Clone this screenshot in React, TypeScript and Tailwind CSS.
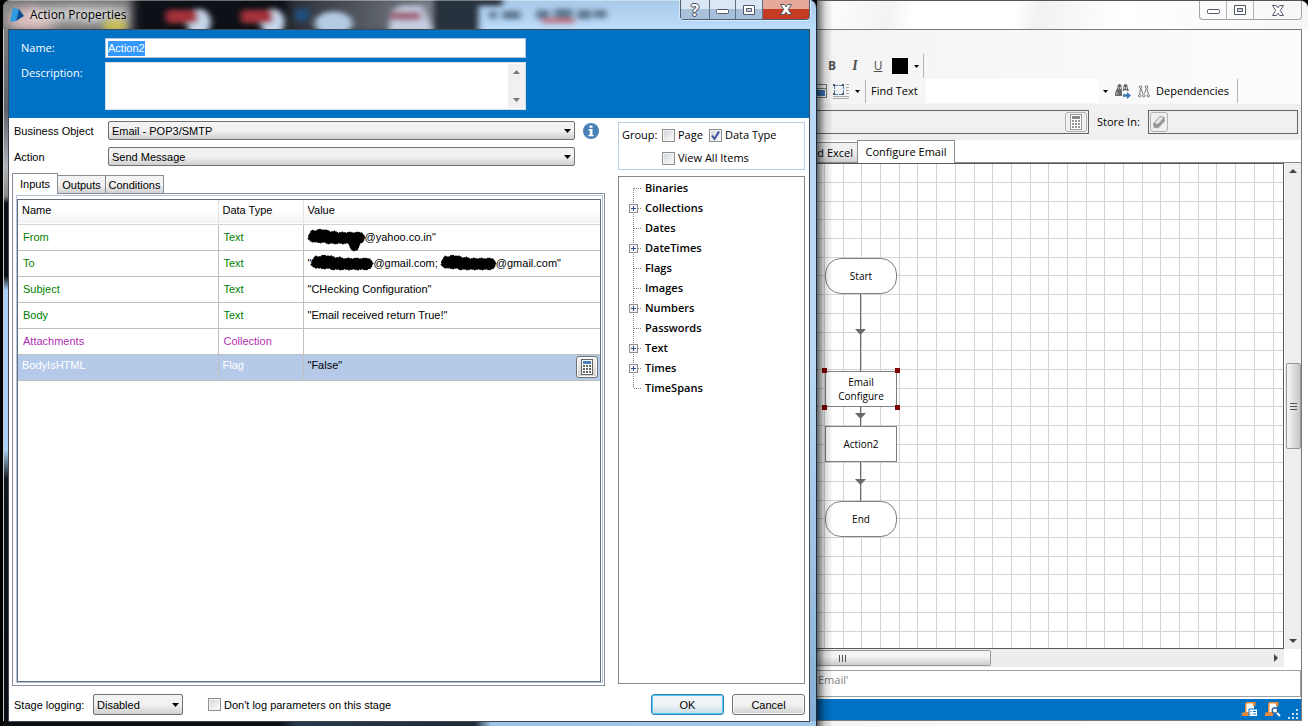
import { useState } from 'react';
import type { ReactNode } from 'react';

type Row = {
  name: string;
  type: string;
  value: ReactNode;
  tone: string;
};

const treeNodes = [
  { label: 'Binaries', open: false },
  { label: 'Collections', open: true },
  { label: 'Dates', open: false },
  { label: 'DateTimes', open: true },
  { label: 'Flags', open: false },
  { label: 'Images', open: false },
  { label: 'Numbers', open: true },
  { label: 'Passwords', open: false },
  { label: 'Text', open: true },
  { label: 'Times', open: true },
  { label: 'TimeSpans', open: false },
];

function Scribble({ tail = false, className }: { tail?: boolean; className: string }) {
  return (
    <svg viewBox="0 0 60 16" preserveAspectRatio="none" className={`h-4 shrink-0 overflow-visible ${className}`} aria-label="redacted">
      <path
        d="M1 6 4 1 8 2 12 0 15 1 20 1 24 3 28 2 32 4 36 3 40 4 44 3 48 4 52 3 57 4 60 8 58 13 53 15 49 14 45 15 41 14 37 15 33 14 29 15 25 14 21 15 17 13 13 14 9 13 4 13 0 10Z"
        stroke="#000"
        strokeWidth="1"
        strokeDasharray="2 1"
      />
      {tail && <path d="M42 12 45 20 48 22 52 21 56 12Z" stroke="#000" strokeDasharray="2 1" />}
    </svg>
  );
}

const rows: Row[] = [
  { name: 'From', type: 'Text', tone: 'text-[#008000]', value: <><Scribble tail className="w-[57px]" />@yahoo.co.in"</> },
  {
    name: 'To',
    type: 'Text',
    tone: 'text-[#008000]',
    value: <>"<Scribble className="w-[62px]" />@gmail.com;&nbsp;<Scribble className="w-[55px]" />@gmail.com"</>,
  },
  { name: 'Subject', type: 'Text', tone: 'text-[#008000]', value: '"CHecking Configuration"' },
  { name: 'Body', type: 'Text', tone: 'text-[#008000]', value: '"Email received return True!"' },
  { name: 'Attachments', type: 'Collection', tone: 'text-[#b030b0]', value: '' },
];

function Calculator({ screen = '#4a80b8', body = '#666' }: { screen?: string; body?: string }) {
  return (
    <svg width="12" height="16" viewBox="0 0 12 16" shapeRendering="crispEdges">
      <rect x="0.5" y="0.5" width="11" height="15" fill="#fff" stroke={body} />
      <rect x="2" y="2" width="8" height="3" fill={screen} />
      {[6, 9, 12].map((y) =>
        [2, 5, 8].map((x) => <rect key={`${x}-${y}`} x={x} y={y} width="2" height="2" fill={body} />)
      )}
    </svg>
  );
}

function Caret({ className = '' }: { className?: string }) {
  return (
    <svg width="7" height="4" viewBox="0 0 7 4" className={className}>
      <path d="M0 0h7L3.500 4z" fill="#000" />
    </svg>
  );
}

function SmallCaret() {
  return <svg width="5" height="3" viewBox="0 0 5 3"><path d="M0 0h5L2.500 3z" fill="#000" /></svg>;
}

function Select({ id, options, className }: { id: string; options: string[]; className: string }) {
  return (
    <div className={`relative ${className}`}>
      <select
        id={id}
        className="block h-full w-full appearance-none rounded-[2px] border border-[#707070] bg-linear-to-b from-[#f2f2f2] from-50% to-[#cfcfcf] to-100% pl-[3px] text-[11px] leading-4 text-black"
      >
        {options.map((o) => <option key={o}>{o}</option>)}
      </select>
      <Caret className="pointer-events-none absolute top-1/2 right-1 -translate-y-1/2" />
    </div>
  );
}

function Check({ label, checked = false, className = '' }: { label: string; checked?: boolean; className?: string }) {
  const [on, setOn] = useState(checked);
  return (
    <label className={`flex items-center gap-[3px] ${className}`}>
      <span className="relative size-[13px]">
        <input
          type="checkbox"
          checked={on}
          onChange={(e) => setOn(e.target.checked)}
          className="block size-[13px] appearance-none border border-[#8e8f8f] bg-linear-to-br from-[#cfd3d8] to-white shadow-[inset_0_0_0_1px_#f4f4f4]"
        />
        {on && (
          <svg viewBox="0 0 13 13" className="pointer-events-none absolute inset-0">
            <path d="M3 6.500 5.500 10 10 2.500" fill="none" stroke="#3c4f9a" strokeWidth="2" />
          </svg>
        )}
      </span>
      {label}
    </label>
  );
}

// Things behind the glass title bar, blurred by the window theme
function GlassBackdrop() {
  return (
    <svg viewBox="0 0 814 30" preserveAspectRatio="none" className="absolute inset-0 h-full w-full" aria-hidden="true">
      <defs>
        <filter id="glass" x="-10%" y="-50%" width="120%" height="200%">
          <feGaussianBlur stdDeviation="5" />
        </filter>
        <filter id="glassText" x="-10%" y="-50%" width="120%" height="200%">
          <feGaussianBlur stdDeviation="3" />
        </filter>
        <linearGradient id="slate" x1="0" x2="1">
          <stop offset="0" stopColor="#2a2e35" />
          <stop offset="1" stopColor="#7c828c" />
        </linearGradient>
        <linearGradient id="sky" x1="0" x2="0" y1="0" y2="1">
          <stop offset="0" stopColor="#a9c9e8" />
          <stop offset="1" stopColor="#bcdcfc" />
        </linearGradient>
      </defs>
      <rect width="814" height="30" fill="#0d1016" />
      <g filter="url(#glass)">
        <rect x="-10" y="-4" width="140" height="40" fill="#868686" />
        <ellipse cx="30" cy="20" rx="24" ry="12" fill="#d8bcbc" />
        <ellipse cx="80" cy="14" rx="45" ry="8" fill="#b4b4b4" />
        <rect x="285" y="-6" width="150" height="42" fill="url(#slate)" />
      </g>
      <g filter="url(#glassText)">
        <ellipse cx="112" cy="26" rx="12" ry="7" fill="#c6bb58" />
        <ellipse cx="196" cy="23" rx="12" ry="14" fill="#c7d8ec" />
        <rect x="163" y="10" width="32" height="14" rx="4" fill="#a2303a" />
        <ellipse cx="270" cy="23" rx="12" ry="14" fill="#c7d8ec" />
        <rect x="238" y="10" width="32" height="14" rx="4" fill="#a2303a" />
        <rect x="293" y="9" width="13" height="13" fill="#1d4f80" />
        <ellipse cx="331" cy="24" rx="19" ry="12" fill="#b4cbe4" />
        <path d="M386 34 388 12 398 6 420 6 432 34Z" fill="#c5cde2" />
        <rect x="388" y="12" width="30" height="9" fill="#a06678" />
      </g>
      <rect x="470" width="344" height="30" fill="url(#sky)" />
      <g filter="url(#glassText)">
        <rect x="434" y="-8" width="42" height="46" fill="#26323e" />
        <rect x="468" y="-8" width="32" height="14" fill="#26323e" />
        <path d="M487 11h7v9h-7zM500 11h18v9h-18zM534 10h13v10h-13zM552 9h18v11h-18zM575 10h14v10h-14zM592 10h12v9h-12z" fill="#5f7790" />
        <rect x="540" y="19" width="32" height="5" fill="#c5707c" />
      </g>
      <rect width="814" height="1" fill="#fff" opacity="0.400" />
    </svg>
  );
}

function MinIcon() {
  return (
    <svg width="13" height="6" viewBox="0 0 13 6">
      <rect x="0.500" y="0.500" width="12" height="4" rx="1" fill="#fff" stroke="#535666" />
    </svg>
  );
}

function MaxIcon() {
  return (
    <svg width="12" height="10" viewBox="0 0 12 10">
      <path d="M.5.5h11v9H.5z" fill="#fff" stroke="#535666" />
      <path d="M3.500 3.500h5v3h-5z" fill="#c8d4e4" stroke="#535666" />
    </svg>
  );
}

function CloseIcon() {
  return (
    <svg width="12" height="11" viewBox="0 0 12 11">
      <path d="M.5.5h3.800L6 2.800 7.700.5h3.800L8.300 5.500l3.200 5H7.700L6 8.200l-1.700 2.300H.5l3.200-5z" fill="#fff" stroke="#535666" />
    </svg>
  );
}

function ActionDialog() {
  return (
    <section aria-label="Action Properties" className="relative z-10 flex min-w-0 flex-col bg-black pl-[3px]">
      <div className="relative flex flex-1 flex-col overflow-hidden rounded-tl-lg rounded-tr-lg border-r border-[#1c2b3a] bg-linear-to-b from-[#b9d9f7] from-50% to-[#86aed2]">
        <GlassFrame />
        <header className="relative h-[29px]">
          <GlassBackdrop />
          <div className="relative flex h-full items-start justify-between pr-[6px]">
            <div className="flex h-full items-center gap-[6px] pl-[7px]">
              <svg width="14" height="14" viewBox="0 0 14 14">
                <path d="M3 0 9 1 6 13 0 14Z" fill="#2f9be0" />
                <path d="M9 1 14 8 6 13Z" fill="#0b4f96" />
              </svg>
              <h1 className="pt-px font-['Open_Sans',sans-serif] text-[12px] leading-4 [text-shadow:0_0_6px_#fff,0_0_8px_#fff]">Action Properties</h1>
            </div>
            <div className="flex h-[20px] rounded-b-[4px] border border-t-0 border-[#4c5f75] shadow-[0_0_0_1px_rgba(255,255,255,0.5)]">
              <button aria-label="Help" className="flex w-[29px] items-center justify-center border-r border-[#5c7088] bg-linear-to-b from-[#dbe7f4] from-50% to-[#a9c0da] to-50% font-['Open_Sans',sans-serif] text-[16px] leading-4 font-bold text-white [text-shadow:1px_0_#44485a,-1px_0_#44485a,0_1px_#44485a,0_-1px_#44485a]">?</button>
              <button aria-label="Minimize" className="flex w-[26px] items-end justify-center border-r border-[#5c7088] bg-linear-to-b from-[#dbe7f4] from-50% to-[#a9c0da] to-50% pb-1"><MinIcon /></button>
              <button aria-label="Maximize" className="flex w-[27px] items-center justify-center border-r border-[#5c7088] bg-linear-to-b from-[#dbe7f4] from-50% to-[#a9c0da] to-50%"><MaxIcon /></button>
              <button aria-label="Close" className="flex w-[46px] items-center justify-center rounded-br-[3px] bg-linear-to-b from-[#e5a99c] from-45% to-[#c43a22] to-50%"><CloseIcon /></button>
            </div>
          </div>
        </header>

        <div className="relative mr-[6px] mb-[4px] ml-[5px] flex flex-1 flex-col border border-[#3f4a55] bg-white">
          <div className="flex flex-col gap-1 bg-[#0072c6] px-3 pt-2 pb-2 font-['Open_Sans',sans-serif] text-[11px] leading-4 text-white">
            <div className="flex items-center">
              <label htmlFor="stage-name" className="w-[84px]">Name:</label>
              <div className="flex h-[20px] w-full max-w-[421px] items-center border border-[#a9c4de] bg-white px-[2px]">
                <input
                  id="stage-name"
                  defaultValue="Action2"
                  className="h-[15px] w-[37px] bg-[#3399ff] font-['Liberation_Sans',Arial,sans-serif] text-[11px] leading-4 text-white outline-none"
                />
              </div>
            </div>
            <div className="flex">
              <label htmlFor="stage-desc" className="w-[84px] pt-[3px]">Description:</label>
              <div className="flex h-[48px] w-full max-w-[421px] border border-[#d5dde5] bg-white">
                <textarea id="stage-desc" className="min-w-0 flex-1 resize-none outline-none" />
                <div className="my-px flex w-[17px] flex-col items-center justify-between bg-[#f0f0f0] py-[6px]">
                  <svg width="7" height="4" viewBox="0 0 7 4"><path d="M0 4h7L3.500 0z" fill="#777" /></svg>
                  <svg width="7" height="4" viewBox="0 0 7 4"><path d="M0 0h7L3.500 4z" fill="#777" /></svg>
                </div>
              </div>
            </div>
          </div>

          <div className="flex flex-1 gap-[13px] pt-[3px] pr-1 pl-[3px] text-[11px]">
            <div className="flex min-w-0 flex-1 flex-col">
              <div className="mb-[7px] flex items-center pl-[2px]">
                <label htmlFor="object" className="w-[94px] shrink-0 leading-4">Business Object</label>
                <Select id="object" options={['Email - POP3/SMTP']} className="h-[19px] flex-1" />
                <button aria-label="Object information" className="mr-[6px] ml-2">
                  <svg width="16" height="16" viewBox="0 0 16 16">
                    <circle cx="8" cy="8" r="8" fill="#4a80b8" />
                    <path d="M6.500 2.500h3v2.300h-3zM5.500 6h4v6h1.200v1.300H5.300V12h1.400V7.300H5.500z" fill="#fff" />
                  </svg>
                </button>
              </div>
              <div className="mb-[7px] flex items-center pr-[30px] pl-[2px]">
                <label htmlFor="action" className="w-[94px] shrink-0 leading-4">Action</label>
                <Select id="action" options={['Send Message']} className="h-[19px] flex-1" />
              </div>

              <div role="tablist" className="z-10 -mb-px flex items-end leading-4">
                <button role="tab" aria-selected="true" className="h-[21px] w-[46px] border border-b-0 border-[#898c95] bg-white">Inputs</button>
                <button role="tab" className="-ml-px h-[19px] w-[49px] border border-[#898c95] bg-linear-to-b from-[#f3f3f3] from-50% to-[#d0d0d0]">Outputs</button>
                <button role="tab" className="-ml-px h-[19px] w-[59px] border border-[#898c95] bg-linear-to-b from-[#f3f3f3] from-50% to-[#d0d0d0]">Conditions</button>
              </div>
              <div role="tabpanel" className="flex flex-1 border border-[#898c95] p-px pb-[2px] pl-[3px]">
                <div className="flex-1 border border-[#b0c4de] pt-[3px] pr-px">
                  <div className="h-full border border-[#646d78]">
                    <table className="w-full table-fixed border-collapse leading-4">
                      <colgroup>
                        <col className="w-[200px]" />
                        <col className="w-[85px]" />
                        <col />
                      </colgroup>
                      <thead>
                        <tr className="h-[24px] border-b border-[#d5d5d5] bg-linear-to-b from-white from-40% to-[#f2f3f5] text-left align-top">
                          <th className="border-r border-[#e3e4e6] px-1 pt-[2px] font-normal">Name</th>
                          <th className="border-r border-[#e3e4e6] px-1 pt-[2px] font-normal">Data Type</th>
                          <th className="px-1 pt-[2px] font-normal">Value</th>
                        </tr>
                      </thead>
                      <tbody>
                        {rows.map((r) => (
                          <tr key={r.name} className="h-[26px] border-b border-[#bfbfbf]">
                            <td className={`border-r border-[#bfbfbf] px-[5px] ${r.tone}`}>{r.name}</td>
                            <td className={`border-r border-[#bfbfbf] px-[5px] ${r.tone}`}>{r.type}</td>
                            <td className="px-1"><div className="flex items-center">{r.value}</div></td>
                          </tr>
                        ))}
                        <tr className="h-[26px] border-b border-[#bfbfbf] bg-[#b5cae9] text-white">
                          <td className="border-r border-[#bfbfbf] px-1 pb-1">BodyIsHTML</td>
                          <td className="border-r border-[#bfbfbf] px-1 pb-1">Flag</td>
                          <td className="pr-[2px] pl-1 text-black">
                            <div className="flex items-center justify-between">
                              <span className="pb-1">"False"</span>
                              <button aria-label="Edit expression" className="flex h-[22px] w-[22px] items-center justify-center rounded-[3px] border border-[#707070] bg-linear-to-b from-[#f5f5f5] to-[#d2d2d2] shadow-[inset_0_0_0_1px_#fff]">
                                <Calculator />
                              </button>
                            </div>
                          </td>
                        </tr>
                      </tbody>
                    </table>
                  </div>
                </div>
              </div>
            </div>

            <aside className="mb-[2px] flex w-[187px] flex-col gap-[6px] font-['Open_Sans',sans-serif] text-[11px] leading-4">
              <fieldset className="mt-px h-[48px] border border-[#b9cfe4] pt-1 pl-[3px]">
                <div className="mb-[7px] flex items-center">
                  <span className="w-[40px]">Group:</span>
                  <Check label="Page" className="w-[47px]" />
                  <Check label="Data Type" checked />
                </div>
                <Check label="View All Items" className="pl-[40px]" />
              </fieldset>
              <ul role="tree" className="flex-1 border border-[#828790] pt-[1px] pl-[10px] font-semibold">
                {treeNodes.map((n, i) => (
                  <li key={n.label} role="treeitem" className="flex h-5 items-center gap-[3px]">
                    <svg width="13" height="20" viewBox="0 0 13 20" shapeRendering="crispEdges">
                      <path
                        d={`M4.500 ${i === 0 ? 10 : 0}V${i === treeNodes.length - 1 ? 10 : 20}M5 10.500H13`}
                        stroke="#808080"
                        strokeDasharray="1 1"
                      />
                      {n.open && (
                        <>
                          <rect x="0.500" y="6.500" width="8" height="8" fill="#f4f4f4" stroke="#919191" />
                          <path d="M2 10.500h5M4.500 8v5" stroke="#33529b" />
                        </>
                      )}
                    </svg>
                    {n.label}
                  </li>
                ))}
              </ul>
            </aside>
          </div>

          <footer className="flex items-center pt-2 pr-1 pb-[6px] pl-[5px] text-[11px] leading-4">
            <label htmlFor="logging" className="w-[79px]">Stage logging:</label>
            <Select id="logging" options={['Disabled', 'Enabled', 'Errors only']} className="h-[21px] w-[90px]" />
            <Check label="Don't log parameters on this stage" className="ml-[25px]" />
            <button className="ml-auto h-[21px] w-[73px] rounded-[3px] border border-[#3c7fb1] bg-linear-to-b from-[#eef4f8] from-50% to-[#c9dbe5] shadow-[inset_0_0_0_1px_#48cdf5]">OK</button>
            <button className="ml-2 h-[21px] w-[73px] rounded-[3px] border border-[#707070] bg-linear-to-b from-[#f2f2f2] from-50% to-[#d0d0d0] shadow-[inset_0_0_0_1px_#fafafa]">Cancel</button>
          </footer>
        </div>
      </div>
    </section>
  );
}

// Side and bottom edges of the glass frame
function GlassFrame() {
  return (
    <div aria-hidden="true">
      <div className="absolute inset-y-0 left-0 w-[6px] border-l border-[#c8ccd0] bg-[linear-gradient(to_bottom,#8a8a8a_0%,#5f6367_15%,#b0b4b8_23%,#8a8a8a_27%,#0c1016_28%,#0c1016_38%,#a9d0f5_40%,#a9d0f5_62%,#10161c_66%,#0a0e12_100%)]" />
      <div className="absolute inset-x-0 bottom-0 h-[5px] bg-[linear-gradient(to_right,#0b0f12_0%,#0b0f12_34%,#26384a_36%,#1d2b38_58%,#9cc2e6_60%,#a3c8ea_100%)]" />
    </div>
  );
}

const PITCH = 18.69;

function GridLines() {
  const at = (start: number, i: number) => Math.round(start + i * PITCH) + 0.5;
  return (
    <svg className="absolute inset-0 h-full w-full" aria-hidden="true" shapeRendering="crispEdges" stroke="#d3d3d3">
      {Array.from({ length: 120 }, (_, i) => (
        <line key={`v${i}`} x1={at(7, i)} x2={at(7, i)} y1="0" y2="100%" />
      ))}
      {Array.from({ length: 80 }, (_, i) => (
        <line key={`h${i}`} y1={at(18, i)} y2={at(18, i)} x1="0" x2="100%" />
      ))}
    </svg>
  );
}

function FlowCanvas() {
  const box = 'absolute left-[8px] flex h-[36px] w-[72px] items-center justify-center border border-[#808080] bg-white text-center';
  return (
    <div className="relative min-h-0 flex-1 overflow-hidden border-t border-r border-b border-[#5a5a5a] bg-white font-['Open_Sans',sans-serif] text-[10px] leading-[14px]">
      <GridLines />
      <svg width="80" height="380" className="absolute top-0 left-0" aria-hidden="true">
        <path d="M43.500 129V208M43.500 240V264M43.500 296V340" stroke="#696969" />
        <path d="M38 165h11l-5.500 6zM38 249h11l-5.500 6zM38 315h11l-5.500 6z" fill="#696969" />
      </svg>
      <div className={`${box} top-[94px] rounded-[16px]`}>Start</div>
      <div className={`${box} top-[207px]`}>
        Email<br />Configure
        <i className="absolute -top-[4px] -left-[4px] size-[5px] bg-[#800000]" />
        <i className="absolute -top-[4px] -right-[4px] size-[5px] bg-[#800000]" />
        <i className="absolute -bottom-[4px] -left-[4px] size-[5px] bg-[#800000]" />
        <i className="absolute -right-[4px] -bottom-[4px] size-[5px] bg-[#800000]" />
      </div>
      <div className={`${box} top-[262px]`}>Action2</div>
      <div className={`${box} top-[337px] rounded-[16px]`}>End</div>
    </div>
  );
}

function ScrollArrow({ d }: { d: string }) {
  return <svg width="8" height="8" viewBox="0 0 8 8"><path d={d} fill="#444" /></svg>;
}

function StudioWindow() {
  const caption = 'flex items-center justify-center';
  return (
    <section aria-label="Process Studio" className="relative flex min-w-0 flex-col overflow-hidden rounded-tr-lg border-t border-[#555] bg-linear-to-r from-[#f4f4f4] to-white font-['Open_Sans',sans-serif] text-[11px] leading-4">
      <header className="flex h-[28px] justify-end bg-[linear-gradient(100deg,#fff_0%,#f3f3f3_15%,#fff_20%,#fff_40%,#f1f1f1_45%,#fff_62%,#f6f6f6_100%)] pr-[6px]">
        <div className="flex h-[19px] rounded-b-[4px] border border-t-0 border-[#a0a0a8]">
          <button aria-label="Minimize" className={`${caption} w-[27px] border-r border-[#b4b4ba] pt-1`}><MinIcon /></button>
          <button aria-label="Maximize" className={`${caption} w-[27px] border-r border-[#b4b4ba]`}><MaxIcon /></button>
          <button aria-label="Close" className={`${caption} w-[47px]`}><CloseIcon /></button>
        </div>
      </header>

      <div className="mr-[6px] mb-[5px] flex flex-1 flex-col border border-l-0 border-[#7a7a7a] bg-white">
        <div className="bg-linear-to-r from-[#f4f4f4] to-[#fcfcfc] pt-6">
          <div className="flex h-[24px] w-[107px] items-center border-r border-[#b4b4b4] pl-[6px] text-[12px] font-bold text-[#505050]">
            <button aria-label="Bold" className="w-[18px]">B</button>
            <button aria-label="Italic" className="ml-[5px] w-[18px] font-['Liberation_Serif',serif] text-[14px] italic">I</button>
            <button aria-label="Underline" className="ml-[5px] w-[18px] font-normal underline">U</button>
            <button aria-label="Font colour" className="ml-[5px] flex items-center gap-[6px]">
              <span className="size-4 bg-black" />
              <SmallCaret />
            </button>
          </div>
          <div className="flex h-[26px] items-center">
            <svg width="10" height="14" viewBox="0 0 10 14" shapeRendering="crispEdges">
              <path d="M0 .5h9.500v13H0M0 4.500h9" fill="none" stroke="#777" />
              <rect y="6" width="8" height="6" fill="#3a76b4" />
            </svg>
            <button aria-label="Selection" className="ml-[6px] flex items-center gap-[6px] border-r border-[#b4b4b4] py-1 pr-[5px]">
              <svg width="16" height="15" viewBox="0 0 16 15" shapeRendering="crispEdges">
                <path d="M1.500 2V10M10.500 2V10M2 1.500H10M2 10.500H10" stroke="#4a80b8" strokeDasharray="3 1" />
                <path d="M0 0h2v2H0zM9 0h2v2H9zM0 9h2v2H0zM9 9h2v2H9z" fill="#555" />
                <path d="M13 .5h3M13 3.500h3M13 6.500h3M13 9.500h3M0 12.500h16M0 14.500h16" stroke="#aaa" />
              </svg>
              <SmallCaret />
            </button>
            <label htmlFor="find" className="w-[60px] shrink-0 pl-[5px]">Find Text</label>
            <div className="flex h-6 min-w-0 flex-1 bg-white">
              <input id="find" className="min-w-0 flex-1 outline-none" />
              <button aria-label="Search history" className="flex w-[12px] items-center justify-center bg-[#fafafa]">
                <SmallCaret />
              </button>
            </div>
            <button aria-label="Find next" className="ml-1">
              <svg width="16" height="15" viewBox="0 0 16 15">
                <path d="M2.500 3V1h1V0h2v1h1v2L7 8v4H0V9z" fill="#6b6b6b" />
                <path d="M8.500 3V1h1V0h2v1h1v2L14 7H7.500z" fill="#6b6b6b" />
                <path d="M3.500 3v2M5.500 3v2M9.500 3v2M11.500 3v2M2 8v3M9 6.500h3" stroke="#e4e4e4" strokeWidth="0.800" />
                <path d="M8 10.300h4V8l4 3.500-4 3.500v-2.300H8z" fill="#3a76b4" />
              </svg>
            </button>
            <button className="ml-[7px] mr-[63px] flex items-center gap-[6px] border-r border-[#b4b4b4] py-1 pr-2">
              <svg width="12" height="13" viewBox="0 0 12 13" fill="none" stroke="#777">
                <circle cx="2.500" cy="2" r="1.300" />
                <circle cx="8.500" cy="2" r="1.300" />
                <path d="M2.500 3.500 1.700 9M3 3.500 5 9M8.300 3.500 6.500 8.500M9 3.500 10.300 9" />
                <circle cx="1.700" cy="10.800" r="1.200" />
                <circle cx="5.700" cy="10.800" r="1.200" />
                <circle cx="10.300" cy="10.800" r="1.200" />
              </svg>
              Dependencies
            </button>
          </div>
        </div>

        <div className="flex h-[36px] items-center bg-[#f0f0f0] pr-[3px]">
          <div className="flex h-6 min-w-0 flex-1 items-center justify-end border border-l-0 border-[#646464] pr-[1px]">
            <button aria-label="Expression editor" className="flex h-[20px] w-[22px] items-center justify-center rounded-[3px] border border-[#adb2b5]">
              <Calculator screen="#888" body="#999" />
            </button>
          </div>
          <span className="w-[59px] pl-2">Store In:</span>
          <div className="flex h-6 w-[150px] items-center border border-[#646464] pl-px">
            <button aria-label="Clear" className="flex h-[20px] w-[18px] items-center justify-center rounded-[3px] border border-[#adb2b5]">
              <svg width="14" height="14" viewBox="0 0 14 14">
                <path d="M1 8.500 8 1l4.500 1 .5 4-7 7.500-4.500-1z" fill="#999" />
                <path d="M2.500 8 8 2l3.500.8L6 9z" fill="#e6e6e6" />
              </svg>
            </button>
          </div>
        </div>

        <div role="tablist" className="flex h-[23px] items-end border-b border-[#898c95]">
          <button role="tab" className="h-[20px] w-[40px] border-t border-[#898c95] bg-linear-to-b from-[#f0f0f0] from-40% to-[#d0d0d0] pr-1 text-right">d Excel</button>
          <button role="tab" aria-selected="true" className="z-10 -mb-px h-[23px] w-[98px] border border-b-0 border-[#898c95] bg-white pb-px">Configure Email</button>
        </div>

        <div className="flex flex-1">
          <div className="flex min-w-0 flex-1 flex-col">
            <FlowCanvas />
            <div className="flex h-[18px] items-center justify-between bg-[#ededed] pr-1">
              <div className="flex h-4 w-[174px] items-center justify-center rounded-r-[2px] border border-l-0 border-[#989898] bg-linear-to-b from-[#f4f4f4] from-40% to-[#cdcdd2] pr-[124px]">
                <svg width="8" height="7" viewBox="0 0 8 7" shapeRendering="crispEdges"><path d="M1 0v7M4 0v7M7 0v7" stroke="#555" /></svg>
              </div>
              <ScrollArrow d="M2 0v8L6 4z" />
            </div>
          </div>
          <div className="mb-[18px] ml-px flex w-4 flex-col items-center bg-[#eeeeee] py-1">
            <ScrollArrow d="M0 6h8L4 2z" />
            <div className="flex-1" />
            <div className="flex h-[86px] w-[15px] items-center justify-center rounded-[2px] border border-[#989898] bg-linear-to-r from-[#f6f6f6] to-[#c6c6cc]">
              <svg width="7" height="8" viewBox="0 0 7 8" shapeRendering="crispEdges"><path d="M0 1h7M0 4h7M0 7h7" stroke="#555" /></svg>
            </div>
            <div className="flex-1" />
            <ScrollArrow d="M0 2h8L4 6z" />
          </div>
        </div>

        <div className="mt-[3px] mb-[2px] h-[27px] border border-l-0 border-[#a0a0a0] pt-px pl-px text-[#808080]">Email'</div>
        <div className="flex h-[21px] items-center justify-end gap-[7px] bg-[#0072c6] pr-[2px]">
          <svg width="16" height="15" viewBox="0 0 16 15">
            <path d="M4 1h8v11H3z" fill="#fff" />
            <path d="M4 0h9.500v4H11V1.500H4.500V10H8v4H0v-3.500h3V2z" fill="#e8883a" />
            <path d="M7 7h8.500v7.500H7z" fill="#fff" stroke="#0072c6" />
            <path d="M8.500 9.500h1M11 9.500h3M8.500 12h1M11 12h3" stroke="#0072c6" />
          </svg>
          <svg width="16" height="15" viewBox="0 0 16 15">
            <path d="M4 1h8v11H3z" fill="#fff" />
            <path d="M4 0h9.500v4H11V1.500H4.500V10H8v4H0v-3.500h3V2z" fill="#e8883a" />
            <circle cx="10" cy="8.500" r="2.800" fill="#fff" stroke="#2d5f96" strokeWidth="1.500" />
            <path d="m12 11 3 3" stroke="#fff" strokeWidth="2" />
          </svg>
          <svg width="11" height="11" viewBox="0 0 11 11" fill="#cfe0f0" className="self-end">
            <path d="M8 0h2v2H8zM4 4h2v2H4zM8 4h2v2H8zM0 8h2v2H0zM4 8h2v2H4zM8 8h2v2H8z" />
          </svg>
        </div>
      </div>
      {/* drop shadow of the dialog in front */}
      <div className="pointer-events-none absolute inset-y-0 left-0 z-20 w-4 bg-linear-to-r from-black/60 via-black/15 to-transparent" />
    </section>
  );
}

export default function App() {
  return (
    <main className="grid min-h-screen grid-cols-[minmax(0,817fr)_minmax(0,491fr)] bg-black font-['Liberation_Sans',Arial,sans-serif] text-black">
      <ActionDialog />
      <StudioWindow />
    </main>
  );
}
